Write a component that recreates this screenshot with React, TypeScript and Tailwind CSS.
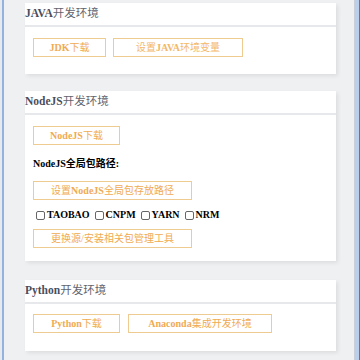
import React from "react";

const serif = { fontFamily: '"Liberation Serif", "Noto Sans CJK SC", serif' };

function Btn({ w, latin, cjk, pre }: { w: string; latin?: string; cjk?: string; pre?: string }) {
  return (
    <div
      className={`${w} h-[19px] border border-[#eecb90] flex items-center justify-center text-[10px] leading-none text-[#f0ab52] whitespace-nowrap`}
      style={serif}
    >
      {pre && <span className="font-normal">{pre}</span>}
      {latin && <span className="font-bold">{latin}</span>}
      {cjk && <span className="font-normal">{cjk}</span>}
    </div>
  );
}

function Header({ latin, cjk }: { latin: string; cjk: string }) {
  return (
    <div className="h-[24px] bg-white flex items-center text-[11.5px] leading-none border-b-2 border-[#e6e8eb]" style={serif}>
      <span className="font-bold text-[#4a4d5c]">{latin}</span>
      <span className="text-[#62656e]">{cjk}</span>
    </div>
  );
}

function Check({ label }: { label: string }) {
  return (
    <div className="flex items-center">
      <span className="w-[9px] h-[9px] border border-[#666] rounded-[2px] bg-white mr-[2px]" />
      <span className="font-bold text-[10px] text-black leading-none">{label}</span>
    </div>
  );
}

export default function App() {
  return (
    <div className="w-[360px] h-[360px] overflow-hidden flex bg-[#eff0f1]" style={serif}>
      <div className="w-[2px] h-full bg-[#e6e9ee]" />
      <div className="w-[2px] h-full bg-[#93b3de]" />
      <div className="w-[350px] pl-[21px] pt-[3px] flex flex-col">
        {/* JAVA */}
        <div className="w-[311px] shadow-[2px_2px_4px_rgba(0,0,0,0.08)]">
          <Header latin="JAVA" cjk="开发环境" />
          <div className="bg-white h-[47px] pl-[8px] pt-[11px] flex gap-[7px]">
            <Btn w="w-[73px]" latin="JDK" cjk="下载" />
            <div
              className="w-[130px] h-[19px] border border-[#eecb90] flex items-center justify-center text-[10px] leading-none text-[#f2b86a] whitespace-nowrap"
              style={serif}
            >
              <span>设置</span>
              <span className="font-bold">JAVA</span>
              <span>环境变量</span>
            </div>
          </div>
        </div>

        {/* NodeJS */}
        <div className="w-[311px] mt-[17px] shadow-[2px_2px_4px_rgba(0,0,0,0.08)]">
          <Header latin="NodeJS" cjk="开发环境" />
          <div className="bg-white h-[146px] pl-[8px] pt-[11px] flex flex-col">
            <Btn w="w-[87px]" latin="NodeJS" cjk="下载" />
            <div className="mt-[13px] h-[12px] flex items-center text-[10px] font-bold text-black leading-none">
              NodeJS全局包路径:
            </div>
            <div className="mt-[11px]">
              <Btn w="w-[159px]" pre="设置" latin="NodeJS" cjk="全局包存放路径" />
            </div>
            <div className="mt-[5px] h-[20px] pl-[3px] flex items-center gap-[5px]">
              <Check label="TAOBAO" />
              <Check label="CNPM" />
              <Check label="YARN" />
              <Check label="NRM" />
            </div>
            <div className="mt-[4px]">
              <Btn w="w-[159px]" cjk="更换源/安装相关包管理工具" />
            </div>
          </div>
        </div>

        {/* Python */}
        <div className="w-[311px] mt-[19px] shadow-[2px_2px_4px_rgba(0,0,0,0.08)]">
          <Header latin="Python" cjk="开发环境" />
          <div className="bg-white h-[47px] pl-[8px] pt-[10px] flex gap-[8px]">
            <Btn w="w-[87px]" latin="Python" cjk="下载" />
            <Btn w="w-[144px]" latin="Anaconda" cjk="集成开发环境" />
          </div>
        </div>
      </div>
      <div className="w-[1px] h-full bg-[#c9d0d9]" />
      <div className="w-[4px] h-full bg-[#b9cfec]" />
      <div className="w-[1px] h-full bg-[#66768c]" />
    </div>
  );
}
